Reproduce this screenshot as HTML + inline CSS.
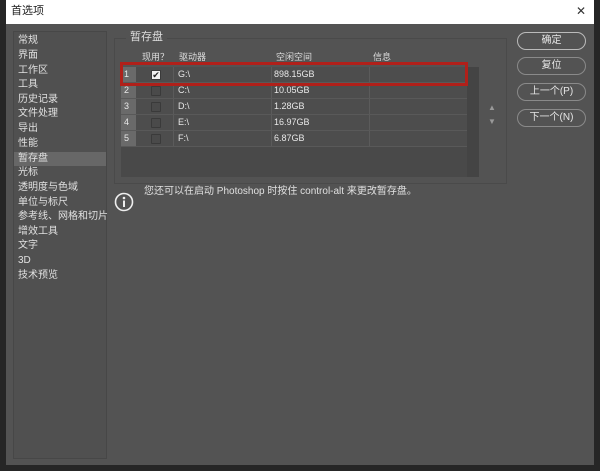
<!DOCTYPE html><html><head><meta charset="utf-8"><style>
*{margin:0;padding:0;box-sizing:border-box}
body{width:600px;height:471px;background:#262626;position:relative;overflow:hidden;font-family:"Liberation Sans","Noto Sans CJK SC",sans-serif;font-size:10px;color:#ddd;line-height:1}
.a{position:absolute}
#title{left:6px;top:0;width:588px;height:24px;background:#fff;color:#222;font-size:11px;padding:6px 0 0 5px}
#body{left:6px;top:24px;width:588px;height:441px;background:#535353}
#side{left:13px;top:31px;width:94px;height:428px;border:1px solid #474747;background:#505050}
.it{position:absolute;left:4px;font-size:10px;line-height:12px;color:#e0e0e0;white-space:nowrap}
#grp{left:114px;top:38px;width:393px;height:146px;border:1px solid #4a4a4a}
#tbl{left:121px;top:67px;width:358px;height:110px;background:#494949}
.row{position:absolute;left:0;width:346px;height:16px;border-bottom:1px solid #595959;background:#4d4d4d}
.row div{position:absolute;top:0;height:15px;line-height:15px;font-size:9px;color:#e8e8e8}
.n{left:0;width:15px;background:#6a6a6a;padding-left:3px}
.cb{left:30px;top:3px!important;width:10px;height:10px!important;border:1px solid #3a3a3a;background:#4a4a4a;border-radius:1px}
.sep{width:1px;background:#5b5b5b;padding:0}
.btn{position:absolute;left:517px;width:69px;height:18px;border:1px solid #8a8a8a;border-radius:9px;text-align:center;line-height:16px;font-size:10px;color:#e6e6e6}
.h{position:absolute;top:52px;font-size:9px;line-height:10px;color:#ddd}
</style></head><body>
<div class="a" id="title">首选项</div>
<div class="a" style="left:576px;top:5px;font-size:12px;color:#333">✕</div>
<div class="a" id="body"></div>
<div class="a" id="side">
<div class="it" style="top:3px">常规</div>
<div class="it" style="top:18px">界面</div>
<div class="it" style="top:33px">工作区</div>
<div class="it" style="top:47px">工具</div>
<div class="it" style="top:62px">历史记录</div>
<div class="it" style="top:76px">文件处理</div>
<div class="it" style="top:91px">导出</div>
<div class="it" style="top:106px">性能</div>
<div style="position:absolute;left:0;top:120px;width:92px;height:14px;background:#676767"></div>
<div class="it" style="top:121px">暂存盘</div>
<div class="it" style="top:135px">光标</div>
<div class="it" style="top:150px">透明度与色域</div>
<div class="it" style="top:165px">单位与标尺</div>
<div class="it" style="top:179px">参考线、网格和切片</div>
<div class="it" style="top:194px">增效工具</div>
<div class="it" style="top:208px">文字</div>
<div class="it" style="top:223px">3D</div>
<div class="it" style="top:238px">技术预览</div>
</div>
<div class="a" id="grp"></div>
<div class="a" style="left:126px;top:31px;background:#535353;padding:0 4px;font-size:11px;line-height:12px">暂存盘</div>
<div class="h" style="left:142px">现用？</div>
<div class="h" style="left:179px">驱动器</div>
<div class="h" style="left:276px">空闲空间</div>
<div class="h" style="left:373px">信息</div>
<div class="a" id="tbl">
<div style="position:absolute;right:0;top:0;width:12px;height:110px;background:#444"></div>
<div class="row" style="top:0"><div class="n">1</div><div class="cb" style="background:#f0f0f0;color:#222;font-size:9px;line-height:9px;text-align:center">✔</div><div class="sep" style="left:52px"></div><div style="left:57px">G:\</div><div class="sep" style="left:150px"></div><div style="left:153px">898.15GB</div><div class="sep" style="left:248px"></div></div>
<div class="row" style="top:16px"><div class="n">2</div><div class="cb"></div><div class="sep" style="left:52px"></div><div style="left:57px">C:\</div><div class="sep" style="left:150px"></div><div style="left:153px">10.05GB</div><div class="sep" style="left:248px"></div></div>
<div class="row" style="top:32px"><div class="n">3</div><div class="cb"></div><div class="sep" style="left:52px"></div><div style="left:57px">D:\</div><div class="sep" style="left:150px"></div><div style="left:153px">1.28GB</div><div class="sep" style="left:248px"></div></div>
<div class="row" style="top:48px"><div class="n">4</div><div class="cb"></div><div class="sep" style="left:52px"></div><div style="left:57px">E:\</div><div class="sep" style="left:150px"></div><div style="left:153px">16.97GB</div><div class="sep" style="left:248px"></div></div>
<div class="row" style="top:64px"><div class="n">5</div><div class="cb"></div><div class="sep" style="left:52px"></div><div style="left:57px">F:\</div><div class="sep" style="left:150px"></div><div style="left:153px">6.87GB</div><div class="sep" style="left:248px"></div></div>
</div>
<div class="a" style="left:120px;top:62px;width:348px;height:24px;border:3px solid #b0201a"></div>
<div class="a" style="left:488px;top:104px;font-size:8px;color:#999">▲</div>
<div class="a" style="left:488px;top:118px;font-size:8px;color:#999">▼</div>
<svg class="a" style="left:114px;top:192px" width="20" height="20"><circle cx="10" cy="10" r="8.5" fill="none" stroke="#eee" stroke-width="1.6"/><circle cx="10" cy="6" r="1.3" fill="#eee"/><rect x="9" y="8.5" width="2" height="6.5" fill="#eee"/></svg>
<div class="a" style="left:144px;top:186px;font-size:10px;line-height:12px;color:#e0e0e0">您还可以在启动 Photoshop 时按住 control-alt 来更改暂存盘。</div>
<div class="btn" style="top:32px;border-color:#bbb">确定</div>
<div class="btn" style="top:57px">复位</div>
<div class="btn" style="top:83px">上一个(P)</div>
<div class="btn" style="top:109px">下一个(N)</div>
</body></html>
